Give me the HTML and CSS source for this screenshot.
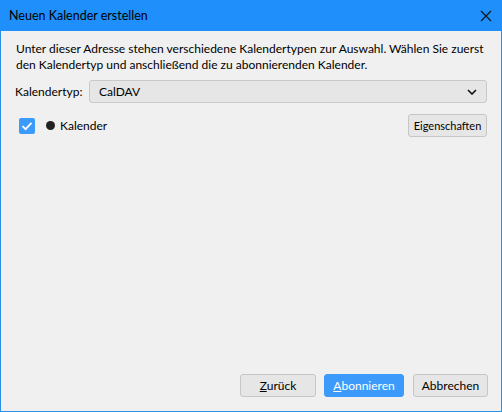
FILE: index.html
```html
<!DOCTYPE html>
<html lang="de">
<head>
<meta charset="utf-8">
<title>Neuen Kalender erstellen</title>
<link rel="stylesheet" href="styles.css">
</head>
<body>
<div class="window">
  <div class="titlebar">
    <span class="title">Neuen Kalender erstellen</span>
    <span class="close">
      <svg width="12" height="12" viewBox="0 0 12 12"><path d="M1 1 L11 11 M11 1 L1 11" stroke="#111" stroke-width="1.1" fill="none"/></svg>
    </span>
  </div>
  <div class="content">
    <p class="desc">Unter dieser Adresse stehen verschiedene Kalendertypen zur Auswahl. Wählen Sie zuerst den Kalendertyp und anschließend die zu abonnierenden Kalender.</p>
    <div class="type-row">
      <span class="label">Kalendertyp:</span>
      <div class="select">
        <span>CalDAV</span>
        <svg width="10" height="6" viewBox="0 0 10 6"><path d="M1 1 L5 5 L9 1" stroke="#111" stroke-width="1.6" fill="none"/></svg>
      </div>
    </div>
    <div class="cal-row">
      <span class="checkbox">
        <svg width="16" height="16" viewBox="0 0 16 16"><path d="M3.5 8.2 L6.6 11.2 L12.5 4.8" stroke="#fff" stroke-width="1.8" fill="none"/></svg>
      </span>
      <span class="dot"></span>
      <span class="cal-name">Kalender</span>
      <button class="btn btn-small">Eigenschaften</button>
    </div>
  </div>
  <div class="footer">
    <button class="btn btn-back"><u>Z</u>urück</button>
    <button class="btn btn-primary"><u>A</u>bonnieren</button>
    <button class="btn btn-cancel">Abbrechen</button>
  </div>
</div>
</body>
</html>
```
FILE: styles.css
```css
* { box-sizing: border-box; }
html, body { margin: 0; padding: 0; }
body {
  width: 502px;
  height: 412px;
  font-family: Lato, "Noto Sans", sans-serif;
  font-size: 12px;
  color: #000;
  background: #f0f0f0;
}
.window {
  width: 502px;
  height: 412px;
  display: flex;
  flex-direction: column;
  border: 1px solid #2b8fe8;
  border-top: none;
  background: #f0f0f0;
}
.titlebar {
  height: 31px;
  margin: 0 -1px;
  background: #1f8ffb;
  display: flex;
  align-items: center;
  justify-content: space-between;
  padding: 0 10px 0 9px;
  flex-shrink: 0;
}
.title {
  color: #000;
  font-size: 12.5px;
  padding-bottom: 1px;
}
.close { display: flex; width: 12px; height: 12px; }
.content {
  flex: 1;
  padding: 10px 14px 0 14px;
  display: flex;
  flex-direction: column;
}
.desc {
  margin: 0;
  line-height: 16px;
  padding-left: 1px;
}
.type-row {
  display: flex;
  align-items: center;
  margin-top: 7px;
}
.label { width: 74px; }
.select {
  flex: 1;
  height: 23px;
  background: #e6e6e6;
  border: 1px solid #c9c9c9;
  border-radius: 3px;
  display: flex;
  align-items: center;
  justify-content: space-between;
  padding: 0 9px 0 9px;
}
.cal-row {
  display: flex;
  align-items: center;
  margin-top: 11px;
  padding-left: 4px;
}
.checkbox {
  width: 16px;
  height: 16px;
  background: #3c9bfa;
  border-radius: 2px;
  display: flex;
}
.dot {
  width: 9px;
  height: 9px;
  border-radius: 50%;
  background: #222;
  margin-left: 11px;
}
.cal-name { margin-left: 5px; flex: 1; }
.btn {
  font-family: inherit;
  font-size: 12px;
  height: 23px;
  background: #e6e6e6;
  border: 1px solid #c6c6c6;
  border-radius: 3px;
  padding: 0;
  color: #000;
}
.btn-small {
  font-size: 11px;
  width: 79px;
}
.footer {
  display: flex;
  justify-content: flex-end;
  padding: 0 13px 14px 0;
  gap: 8px;
}
.btn-back { width: 76px; }
.btn-primary {
  width: 80px;
  background: #3c9bfa;
  border-color: #3c9bfa;
  color: #fff;
  margin-right: 1px;
}
.btn-cancel { width: 75px; }
```
